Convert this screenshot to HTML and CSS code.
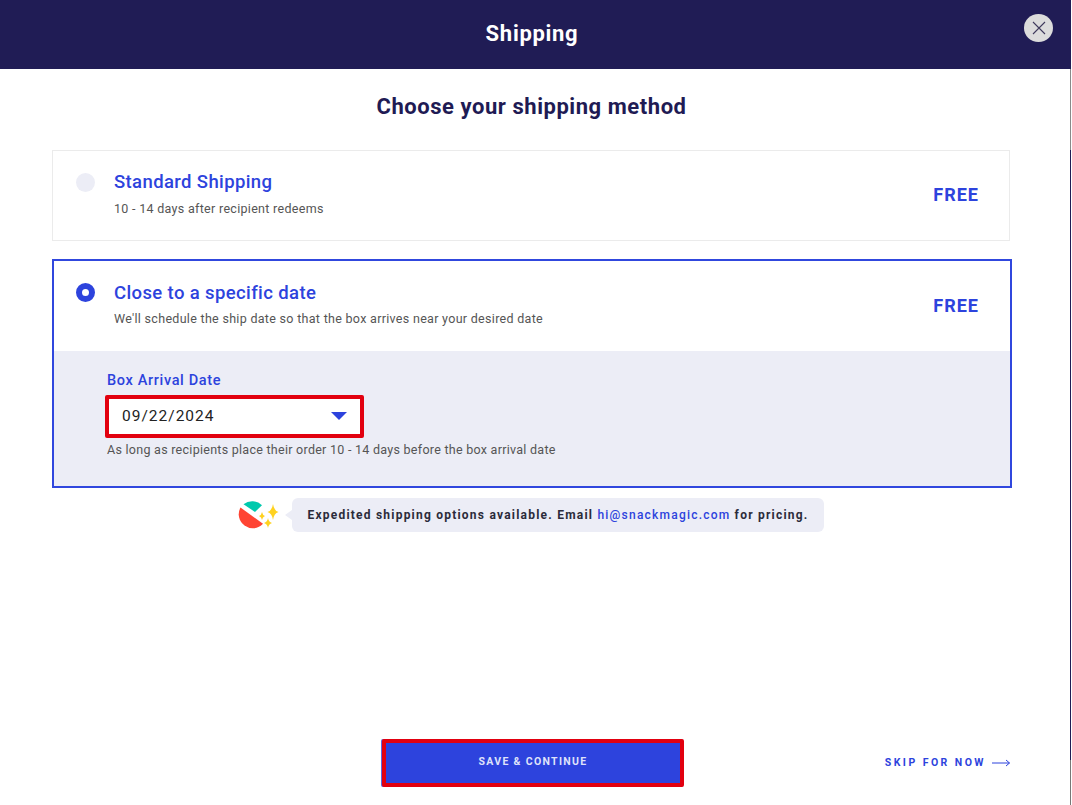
FILE: index.html
```html
<!DOCTYPE html>
<html lang="en">
<head>
<meta charset="utf-8">
<title>Shipping</title>
<link rel="stylesheet" href="styles.css">
</head>
<body>
<div class="modal">
  <header class="topbar">
    <h1 class="topbar-title">Shipping</h1>
    <button class="close" aria-label="Close">
      <svg width="16" height="16" viewBox="0 0 16 16"><path d="M2 2L14 14M14 2L2 14" stroke="#3f3a5c" stroke-width="1.1" fill="none"/></svg>
    </button>
  </header>
  <main class="content">
    <h2 class="heading">Choose your shipping method</h2>
    <section class="option">
      <div class="option-row">
        <span class="radio"></span>
        <div class="option-text">
          <div class="option-name">Standard Shipping</div>
          <div class="option-desc">10 - 14 days after recipient redeems</div>
        </div>
        <div class="price">FREE</div>
      </div>
    </section>
    <section class="option option-active">
      <div class="option-row">
        <span class="radio radio-on"></span>
        <div class="option-text">
          <div class="option-name">Close to a specific date</div>
          <div class="option-desc">We'll schedule the ship date so that the box arrives near your desired date</div>
        </div>
        <div class="price">FREE</div>
      </div>
      <div class="date-panel">
        <div class="date-label">Box Arrival Date</div>
        <div class="date-input">
          <span>09/22/2024</span>
          <svg width="16" height="8" viewBox="0 0 16 8"><path d="M0 0H16L8 8Z" fill="#2d43dd"/></svg>
        </div>
        <div class="date-note">As long as recipients place their order 10 - 14 days before the box arrival date</div>
      </div>
    </section>
    <div class="notice">
      <svg class="logo" width="41" height="32" viewBox="0 0 41 32">
        <path d="M5.500 5.200A14 14 0 0 1 24 6.200L17 13Z" fill="#00c9ad"/>
        <path d="M2.500 8.500L25 24.800A14 14 0 0 1 2.500 8.500Z" fill="#ff4433"/>
        <path d="M35 5Q35.800 11.500 40.500 13Q35.800 14.500 35 21Q34.200 14.500 29.500 13Q34.200 11.500 35 5Z" fill="#ffd21f"/>
        <path d="M24 13Q24.500 16 27 17Q24.500 18 24 21Q23.500 18 21 17Q23.500 16 24 13Z" fill="#ffd21f"/>
        <path d="M30 19Q30.600 23 34 24Q30.600 25 30 29Q29.400 25 26 24Q29.400 23 30 19Z" fill="#ffd21f"/>
      </svg>
      <div class="bubble">Expedited shipping options available. Email <a class="mail">hi@snackmagic.com</a> for pricing.</div>
    </div>
    <footer class="actions">
      <span></span>
      <button class="save">SAVE &amp; CONTINUE</button>
      <a class="skip">SKIP FOR NOW
        <svg class="skip-arrow" width="18" height="8" viewBox="0 0 18 8"><path d="M0 4H17.500M14 1L17.500 4L14 7" stroke="#2d43dd" stroke-width="1" fill="none"/></svg>
      </a>
    </footer>
  </main>
</div>
</body>
</html>
```
FILE: styles.css
```css
* { box-sizing: border-box; }
html, body { margin: 0; height: 100%; background: #fff; overflow: hidden; }
body { font-family: "Roboto", "Liberation Sans", sans-serif; color: #1f1b54; }
.modal { width: 1070px; height: 805px; display: flex; flex-direction: column; background: #fff; position: relative; }
.modal::after { content: ""; position: absolute; top: 0; bottom: 0; right: -1px; width: 1px; background: linear-gradient(#201c55 69px, #8a8a8a 69px, #8a8a8a 150px, #201c55 150px, #201c55 760px, #777 760px); }
.topbar { height: 69px; flex: none; background: #201c55; display: flex; align-items: center; justify-content: center; padding: 0 6px 2px 0; position: relative; }
.topbar-title { margin: 0; color: #fff; font-size: 22px; font-weight: 700; letter-spacing: 0.7px; }
.close { position: absolute; top: 14px; right: 17px; width: 29px; height: 28px; padding: 0; border: 0; border-radius: 50%; background: #dcdcdc; display: flex; align-items: center; justify-content: center; }
.content { flex: 1; display: flex; flex-direction: column; padding: 0 60px 18px 52px; }
.heading { margin: 25px 0 0; height: 56px; font-size: 22px; line-height: 26px; font-weight: 700; letter-spacing: 0.55px; text-align: center; color: #1f1b54; width: 959px; }
.option { width: 958px; border: 1px solid #ebebeb; margin-bottom: 18px; }
.option-active { width: 960px; border: 2px solid #3047de; margin-bottom: 10px; }
.option-row { height: 89px; display: flex; align-items: flex-start; padding: 20px 30px 0 23px; }
.option-active .option-row { height: 90px; padding: 21px 31px 0 22px; }
.radio { flex: none; width: 19px; height: 19px; margin-top: 2px; border-radius: 50%; background: #ecedf6; }
.option-active .radio { margin-top: 1px; }
.radio-on { background: #fff; border: 6px solid #2d43dd; }
.option-text { flex: 1; margin-left: 19px; }
.option-name { font-size: 18.500px; line-height: 22px; font-weight: 500; letter-spacing: 0.38px; color: #2d43dd; }
.option-desc { margin-top: 8px; font-size: 12.500px; line-height: 16px; color: #555; letter-spacing: 0.3px; }
.option-active .option-desc { margin-top: 7px; }
.price { margin-top: 13px; font-size: 18px; line-height: 22px; font-weight: 700; letter-spacing: 1px; color: #2d43dd; }
.date-panel { background: #ecedf6; height: 135px; padding: 21px 0 0 53px; }
.date-label { font-size: 14.500px; line-height: 18px; font-weight: 500; color: #2d43dd; letter-spacing: 0.65px; }
.date-input { width: 259px; height: 43px; margin: 5px 0 0 -2px; padding: 0 13px 2px 13px; background: #fff; border: 4px solid #e2000f; border-radius: 2px; display: flex; align-items: center; justify-content: space-between; font-size: 15.500px; letter-spacing: 1px; color: #222; }
.date-note { margin-top: 4px; font-size: 12.500px; line-height: 16px; color: #555; letter-spacing: 0.27px; }
.notice { width: 960px; display: flex; align-items: center; justify-content: center; gap: 13px; padding-right: 2px; }
.logo { flex: none; }
.bubble { position: relative; height: 34px; padding: 0 15px; border-radius: 6px; background: #ecedf6; display: flex; align-items: center; white-space: pre; font-size: 12px; font-weight: 700; letter-spacing: 1.22px; color: #2b2b3a; }
.bubble::before { content: ""; position: absolute; left: -7px; top: 12px; border: 5px solid transparent; border-left: 0; border-right: 7px solid #ecedf6; }
.mail { color: #2d43dd; font-weight: 500; }
.actions { margin-top: auto; width: 960px; display: grid; grid-template-columns: 330px 302px 1fr; align-items: center; }
.save { height: 48px; padding: 0 0 4px; background: #2d43dd; border: 4px solid #e2000f; border-radius: 2px; box-shadow: -1px 0 0 #5a6be0; color: #dfe2fa; font-family: inherit; font-size: 10.500px; font-weight: 700; letter-spacing: 1.32px; }
.skip { justify-self: end; margin-right: 2px; padding-bottom: 2px; display: flex; align-items: center; gap: 6px; color: #2d43dd; font-size: 10.500px; font-weight: 700; letter-spacing: 2.45px; white-space: nowrap; }
.skip-arrow { margin-top: 2px; }
```
